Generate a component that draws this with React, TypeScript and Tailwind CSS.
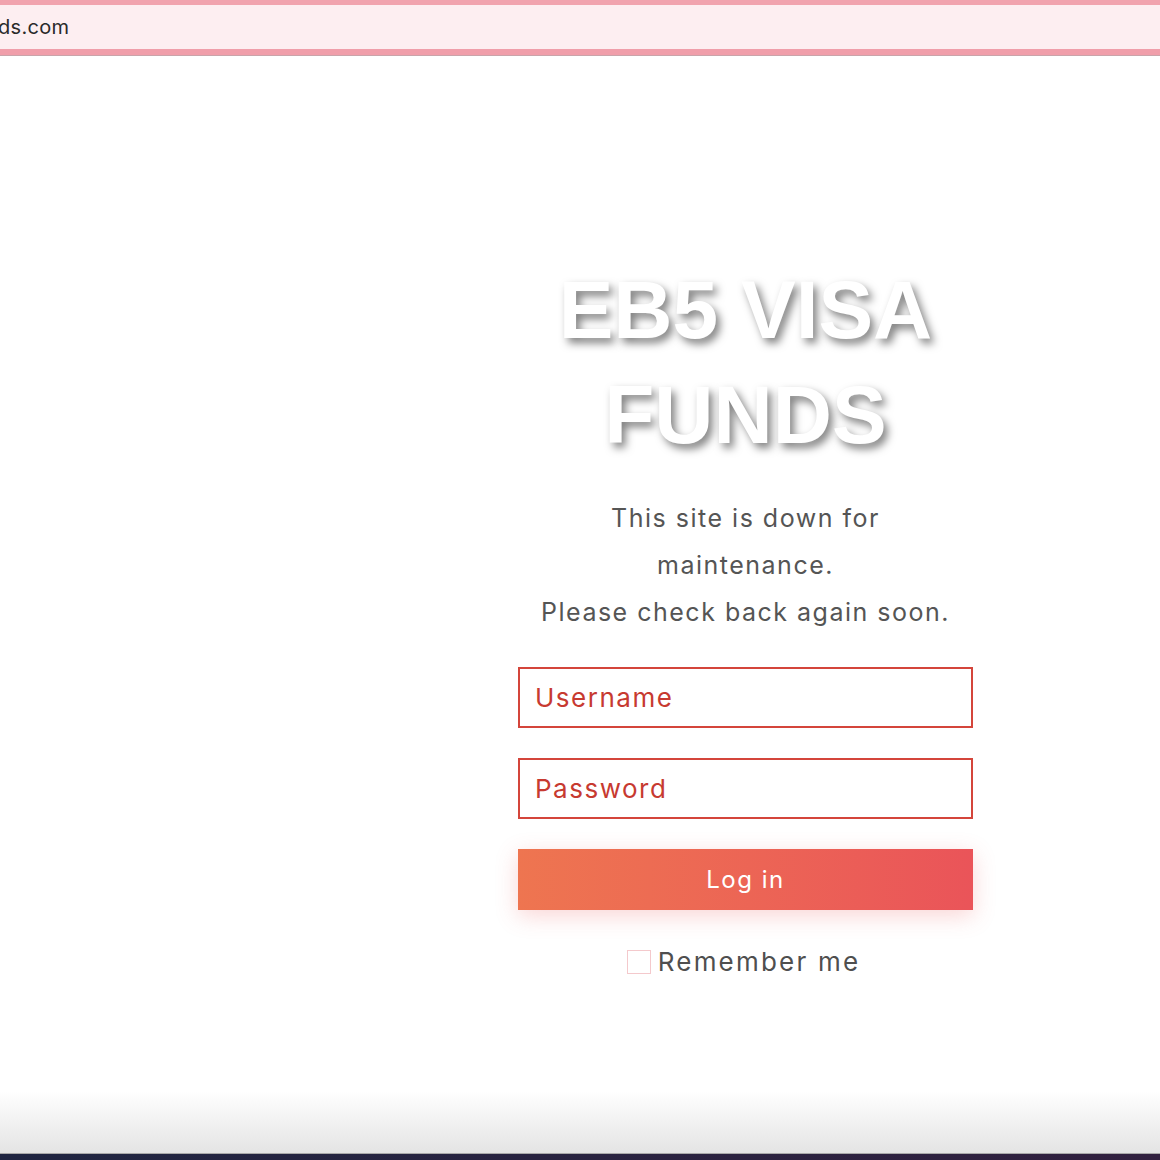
import React from "react";

export default function App() {
  const mont = { fontFamily: '"Inter", "Open Sans", "Liberation Sans", sans-serif' };
  return (
    <div className="w-[1160px] h-[1160px] flex flex-col bg-white overflow-hidden">
      {/* top address-like bar */}
      <div className="h-[56px] shrink-0 flex flex-col">
        <div className="h-[5px] bg-[#f1a3ae]" />
        <div className="h-[44px] bg-[#fdeef1] flex items-center">
          <span
            className="text-[20px] text-[#2a2a2a] -ml-[2px] tracking-[0.3px]"
            style={{ fontFamily: '"Inter", "Liberation Sans", sans-serif' }}
          >
            ds.com
          </span>
        </div>
        <div className="h-[6px] bg-[#f09eaa]" />
        <div className="h-[1px] bg-[#c9a4aa]" />
      </div>

      {/* main */}
      <div className="flex-1 pl-[518px] pt-[201px]">
        <div className="w-[455px] flex flex-col items-center">
          <h1
            className="text-[82px] leading-[105px] font-bold text-white text-center whitespace-nowrap [text-shadow:4px_5px_8px_rgba(0,0,0,0.5)]"
            style={{ fontFamily: '"Liberation Sans", Arial, sans-serif' }}
          >
            EB5 VISA
            <br />
            FUNDS
          </h1>
          <p
            className="mt-[28px] text-[25px] leading-[47px] text-[#555555] text-center whitespace-nowrap tracking-[1.5px]"
            style={mont}
          >
            This site is down for
            <br />
            maintenance.
            <br />
            Please check back again soon.
          </p>
          <form className="mt-[31px] w-[455px] flex flex-col">
            <input
              type="text"
              placeholder="Username"
              className="h-[61px] w-full border-2 border-[#d4453b] bg-white px-[15px] text-[26px] tracking-[1.5px] text-[#c73a30] placeholder:text-[#c73a30] outline-none"
              style={mont}
            />
            <input
              type="password"
              placeholder="Password"
              className="mt-[30px] h-[61px] w-full border-2 border-[#d4453b] bg-white px-[15px] text-[26px] tracking-[1.5px] text-[#c73a30] placeholder:text-[#c73a30] outline-none"
              style={mont}
            />
            <button
              type="button"
              className="mt-[30px] h-[61px] w-full bg-gradient-to-r from-[#ee7550] to-[#ea5459] text-white text-[24px] tracking-[1.5px] shadow-[0_6px_22px_rgba(234,90,90,0.25)]"
              style={mont}
            >
              Log in
            </button>
            <div className="mt-[32px] flex items-center justify-center pr-[4px]">
              <span className="w-[24px] h-[24px] border border-[#f4c9cc] bg-white mr-[7px]" />
              <span className="text-[26px] tracking-[2.2px] text-[#4f4f4f]" style={mont}>
                Remember me
              </span>
            </div>
          </form>
        </div>
      </div>

      {/* bottom fade */}
      <div className="h-[62px] shrink-0 bg-gradient-to-b from-white to-[#e4e4e4]" />
      <div className="h-[1px] shrink-0 bg-[#a9a9a9]" />
      <div className="h-[6px] shrink-0 bg-gradient-to-r from-[#1f2541] to-[#31203f]" />
    </div>
  );
}
